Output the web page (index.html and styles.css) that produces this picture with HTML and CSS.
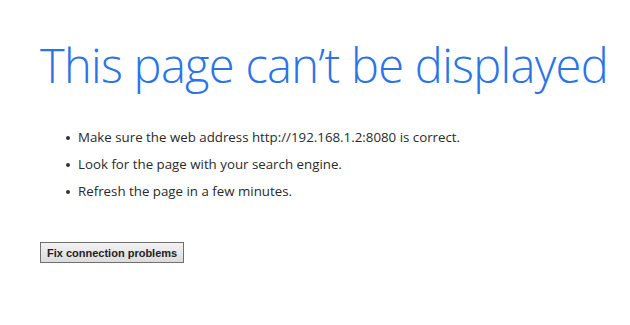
FILE: index.html
```html
<!DOCTYPE html>
<html>
<head>
<meta charset="utf-8">
<link rel="stylesheet" href="styles.css">
</head>
<body>
<div class="page">
  <h1 class="title">This page can’t be displayed</h1>
  <ul class="tips">
    <li>Make sure the web address http://192.168.1.2:8080 is correct.</li>
    <li>Look for the page with your search engine.</li>
    <li>Refresh the page in a few minutes.</li>
  </ul>
  <button class="fix">Fix connection problems</button>
</div>
</body>
</html>
```

FILE: styles.css
```css
html, body {
  margin: 0;
  padding: 0;
  background: #ffffff;
}
.page {
  padding: 30px 0 0 40px;
  display: flex;
  flex-direction: column;
  align-items: flex-start;
}
.title {
  margin: 0;
  font-family: "Open Sans", "Noto Sans", sans-serif;
  font-weight: 300;
  font-size: 47px;
  line-height: 70px;
  color: #2a74e8;
  letter-spacing: -0.7px;
  white-space: nowrap;
}
.tips {
  margin: 24px 0 0 0;
  padding: 0 0 0 38px;
  font-family: "Open Sans", "Noto Sans", sans-serif;
  font-size: 13.3px;
  color: #2a2a2a;
  list-style: none;
}
.tips li {
  position: relative;
  line-height: 27px;
}
.tips li::before {
  content: "";
  position: absolute;
  left: -12px;
  top: 12px;
  width: 4px;
  height: 4px;
  border-radius: 50%;
  background: #333333;
}
.fix {
  margin-top: 37px;
  height: 21px;
  padding: 0 6px;
  font-family: "Liberation Sans", Arial, sans-serif;
  font-weight: bold;
  font-size: 11px;
  color: #222222;
  background: linear-gradient(#f2f2f2, #dcdcdc);
  border: 1px solid #707070;
  border-radius: 0;
}
```
